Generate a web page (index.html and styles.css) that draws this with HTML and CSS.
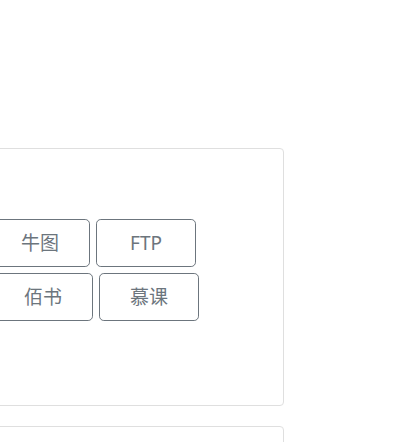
FILE: index.html
```html
<!DOCTYPE html>
<html lang="zh">
<head>
<meta charset="utf-8">
<link rel="stylesheet" href="styles.css">
</head>
<body>
<div class="page">
  <div class="card">
    <div class="row row-a">
      <button class="btn">牛图</button>
      <button class="btn">FTP</button>
    </div>
    <div class="row row-b">
      <button class="btn">佰书</button>
      <button class="btn">慕课</button>
    </div>
  </div>
  <div class="card card-next"></div>
</div>
</body>
</html>
```

FILE: styles.css
```css
html, body {
  margin: 0;
  padding: 0;
  background: #fff;
  overflow: hidden;
}
.page {
  padding-top: 148px;
  margin-left: -40px;
  width: 324px;
  font-family: "Noto Sans", "Noto Sans CJK SC", sans-serif;
}
.card {
  box-sizing: border-box;
  border: 1px solid #dfdfdf;
  border-radius: 4px;
  height: 258px;
  padding-top: 70px;
  margin-bottom: 20px;
  background: #fff;
}
.card-next {
  height: 100px;
  padding: 0;
}
.row {
  display: flex;
  gap: 6px;
}
.row-a {
  padding-left: 29px;
}
.row-b {
  margin-top: 6px;
  padding-left: 32px;
}
.btn {
  box-sizing: border-box;
  width: 100px;
  height: 48px;
  border: 1px solid #6c757d;
  border-radius: 4.8px;
  background: #fff;
  color: #6c757d;
  font-family: "Noto Sans", "Noto Sans CJK SC", sans-serif;
  font-size: 19px;
  padding: 0;
  line-height: 1;
}
```
